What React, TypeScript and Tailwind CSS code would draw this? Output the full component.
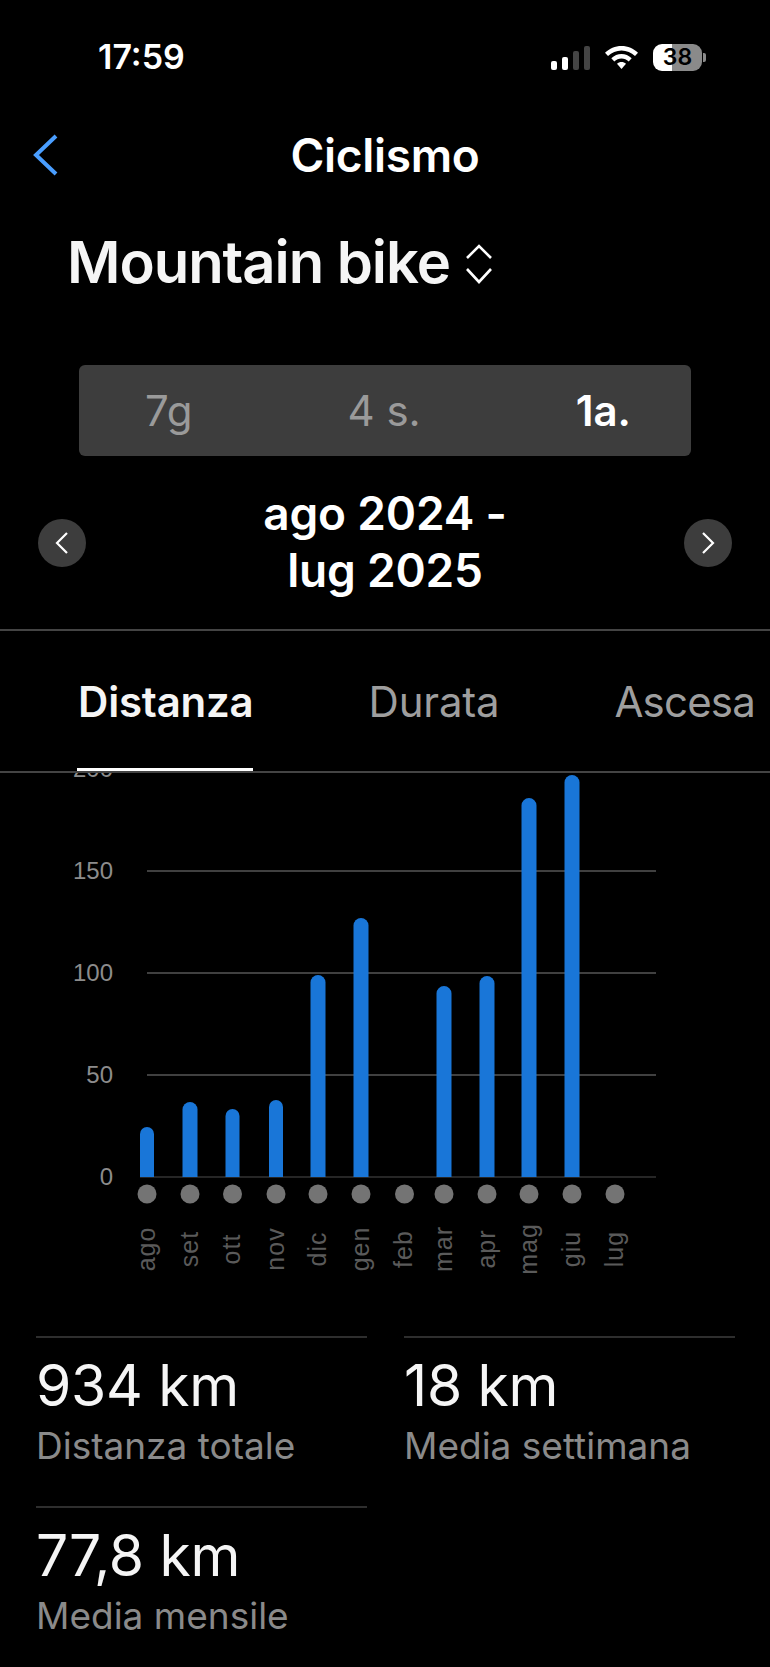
const bars: [string, number, number, number][] = [
  ["ago", 147, 1127, 14],
  ["set", 190, 1102, 15],
  ["ott", 232.5, 1109, 14],
  ["nov", 276, 1100, 14],
  ["dic", 318, 975, 15],
  ["gen", 361, 918, 15],
  ["feb", 404.5, 0, 0],
  ["mar", 444, 986, 15],
  ["apr", 487, 976, 15],
  ["mag", 529, 798, 15],
  ["giu", 572, 775, 15],
  ["lug", 615, 0, 0],
];

const TOP = 773;

function Chart() {
  const y = (v: number) => v - TOP;
  return (
    <svg width="770" height="544" className="block">
      {[871, 973, 1075].map((g) => (
        <line key={g} x1="147" x2="656" y1={y(g)} y2={y(g)} stroke="#404040" strokeWidth="2" />
      ))}
      <line x1="140" x2="656" y1={y(1177)} y2={y(1177)} stroke="#333333" strokeWidth="1.5" />
      {[
        ["200", 769],
        ["150", 871],
        ["100", 973],
        ["50", 1075],
        ["0", 1177],
      ].map(([t, v]) => (
        <text key={t} x="113" y={y(Number(v)) + 8} textAnchor="end" fontSize="24" fill="#8c8c8c" fontFamily="Liberation Sans, sans-serif">
          {t}
        </text>
      ))}
      {bars.map(([m, x, top, w]) => (
        <g key={m}>
          {w > 0 && (
            <path
              d={`M${x - w / 2} ${y(1177)} V${y(top) + w / 2} A${w / 2} ${w / 2} 0 0 1 ${x + w / 2} ${y(top) + w / 2} V${y(1177)} Z`}
              fill="#1976d8"
            />
          )}
          <circle cx={x} cy={y(1194)} r="9.5" fill="#747474" />
          <text
            transform={`translate(${x + 7.5} ${y(1249)}) rotate(-90)`}
            textAnchor="middle"
            fontSize="25"
            letterSpacing="1"
            fill="#5a5a5a"
            fontFamily="Liberation Sans, sans-serif"
          >
            {m}
          </text>
        </g>
      ))}
    </svg>
  );
}

function Stat({ value, label }: { value: string; label: string }) {
  return (
    <div className="h-[170px] border-t-2 border-[#2e2e2e] pt-[13px]">
      <div className="text-[57px] leading-[70px] text-[#f5f5f5] tracking-[-0.3px]">{value}</div>
      <div className="text-[37px] leading-[49px] text-[#8a8a8a]">{label}</div>
    </div>
  );
}

function RoundButton({ dir }: { dir: "l" | "r" }) {
  return (
    <div className="w-[48px] h-[48px] rounded-full bg-[#3d3d3d] flex items-center justify-center">
      <svg width="16" height="24" viewBox="0 0 16 24" fill="none" stroke="#fff" strokeWidth="2.2">
        <path d={dir === "l" ? "M13 2 L3 12 L13 22" : "M3 2 L13 12 L3 22"} />
      </svg>
    </div>
  );
}

export default function App() {
  return (
    <div className="w-[770px] h-[1667px] bg-black overflow-hidden text-white font-['Inter',sans-serif]">
      {/* status bar */}
      <div className="h-[115px] pl-[98px] pr-[64px] pt-[36px] flex justify-between items-start">
        <div className="text-[34px] leading-[42px] font-semibold">17:59</div>
        <div className="flex items-center gap-[15px] pt-[8px]">
          <div className="flex items-end gap-[5px] h-[25px]">
            <div className="w-[6px] h-[9px] rounded-[2px] bg-white" />
            <div className="w-[6px] h-[13px] rounded-[2px] bg-white" />
            <div className="w-[6px] h-[19px] rounded-[2px] bg-[#444444]" />
            <div className="w-[6px] h-[24px] rounded-[2px] bg-[#444444]" />
          </div>
          <svg width="33" height="23" viewBox="0 0 33 23">
            <path d="M16.5 0 C10 0 4.500 2.500 0 6.800 L3 10 C6.700 6.500 11.400 4.400 16.500 4.400 C21.600 4.400 26.300 6.500 30 10 L33 6.800 C28.500 2.500 23 0 16.500 0 Z" fill="#fff" />
            <path d="M16.500 8 C12.800 8 9.200 9.500 6.300 12.300 L9.300 15.500 C11.300 13.600 13.800 12.500 16.500 12.500 C19.200 12.500 21.700 13.600 23.700 15.500 L26.700 12.300 C23.800 9.500 20.200 8 16.500 8 Z" fill="#fff" />
            <path d="M16.500 16 C14.800 16 13.200 16.600 12 17.800 L16.500 23 L21 17.800 C19.800 16.600 18.200 16 16.500 16 Z" fill="#fff" />
          </svg>
          <div className="flex items-center">
            <div className="w-[49px] h-[27px] rounded-[9px] bg-[linear-gradient(90deg,#ffffff_39%,#8a8a8a_39%)] flex items-center justify-center text-[23px] leading-none font-semibold text-black">
              38
            </div>
            <div className="w-[3px] h-[9px] ml-[1px] rounded-r-[2px] bg-[#8a8a8a]" />
          </div>
        </div>
      </div>

      {/* nav */}
      <div className="h-[80px] relative flex items-center justify-center">
        <svg className="absolute left-[31px] top-[18px]" width="28" height="44" viewBox="0 0 28 44" fill="none" stroke="#4a9eff" strokeWidth="4">
          <path d="M25 3 L5 22 L25 41" />
        </svg>
        <div className="text-[46px] leading-[60px] font-semibold tracking-[-0.3px]">Ciclismo</div>
      </div>

      {/* title */}
      <div className="h-[140px] pl-[67px] pt-[31px] flex items-start gap-[15px]">
        <div className="text-[58px] leading-[72px] font-semibold text-[#f5f5f5] tracking-[-1.05px]">Mountain bike</div>
        <svg className="mt-[18px]" width="28" height="40" viewBox="0 0 28 40" fill="none" stroke="#fff" strokeWidth="2.6">
          <path d="M2 14 L14 2 L26 14" />
          <path d="M2 25 L14 38 L26 25" />
        </svg>
      </div>

      {/* segmented */}
      <div className="mx-[79px] mt-[30px] h-[91px] rounded-[6px] bg-[#3d3d3d] flex items-center justify-between pl-[66px] pr-[60px] text-[42px] leading-[50px]">
        <span className="text-[#9a9a9a]">7g</span>
        <span className="text-[#9a9a9a]">4 s.</span>
        <span className="font-semibold text-white">1a.</span>
      </div>

      {/* date range */}
      <div className="h-[175px] pt-[29px] px-[38px] flex items-start justify-between border-b-2 border-[#444444]">
        <div className="mt-[34px]">
          <RoundButton dir="l" />
        </div>
        <div className="text-center text-[46px] leading-[57px] font-semibold tracking-[-0.2px]">
          ago 2024 -<br />lug 2025
        </div>
        <div className="mt-[34px]">
          <RoundButton dir="r" />
        </div>
      </div>

      {/* tabs */}
      <div className="h-[142px] pt-[41px] flex items-start border-b-2 border-[#444444] relative text-[42px] leading-[60px] text-[#9e9e9e] tracking-[-0.2px] overflow-hidden">
        <div className="absolute left-[77px] bottom-0 w-[176px] h-[3px] bg-white" />
        <span className="ml-[78px] font-semibold text-[#f5f5f5]">Distanza</span>
        <span className="ml-[115px]">Durata</span>
        <span className="ml-[115px] whitespace-nowrap tracking-[-0.8px]">Ascesa</span>
      </div>

      <Chart />

      {/* stats */}
      <div className="mx-[36px] grid grid-cols-[331px_331px] gap-x-[37px] mt-[19px]">
        <Stat value="934 km" label="Distanza totale" />
        <Stat value="18 km" label="Media settimana" />
        <Stat value="77,8 km" label="Media mensile" />
      </div>
    </div>
  );
}
